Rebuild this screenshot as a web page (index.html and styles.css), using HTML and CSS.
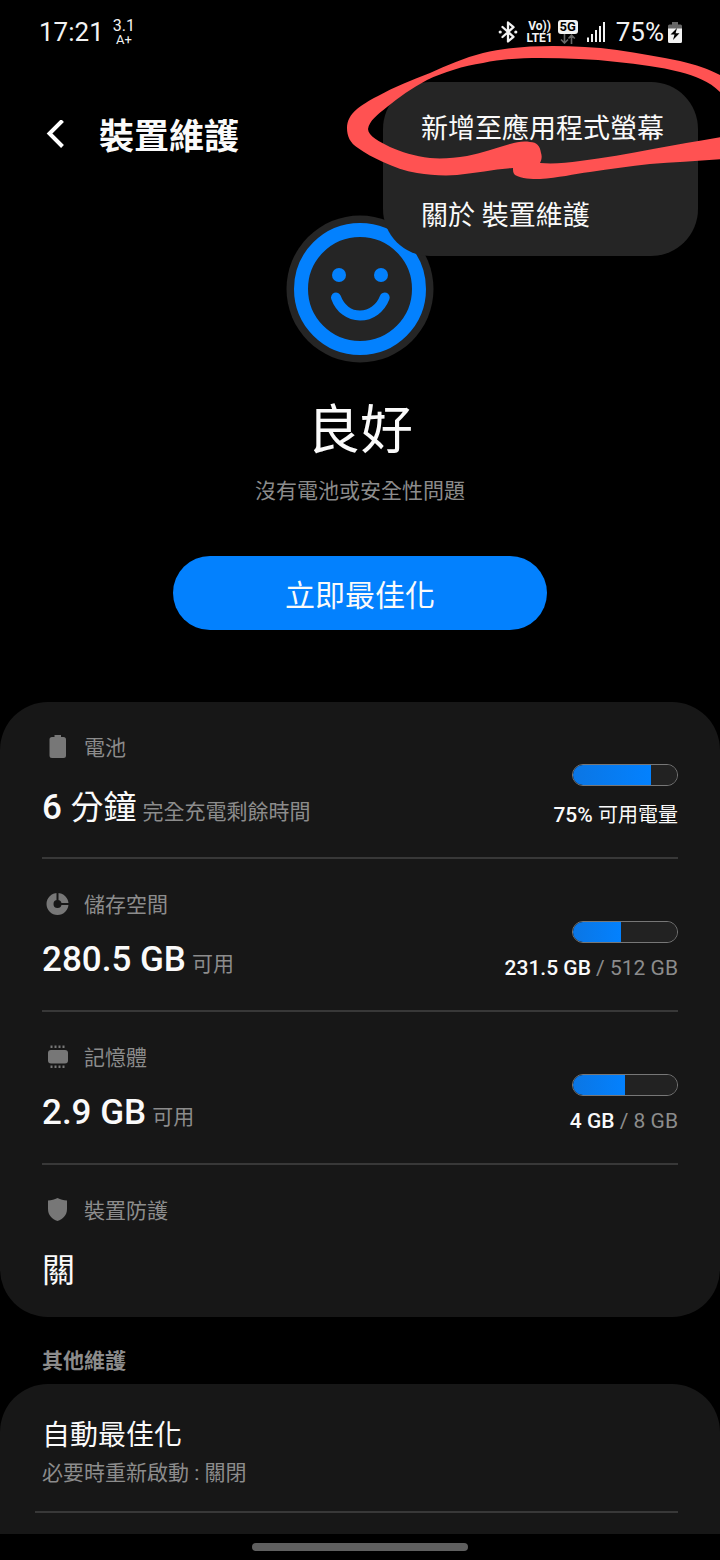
FILE: index.html
```
<!DOCTYPE html>
<html lang="zh-Hant">
<head>
<meta charset="utf-8">
<meta name="viewport" content="width=device-width, initial-scale=1">
<title>裝置維護</title>
<link rel="stylesheet" href="styles.css">
</head>
<body>
<div class="screen">
  <header class="status-bar">
    <span class="clock">17:21</span>
    <span class="widget"><span class="widget-top">3.1</span><span class="widget-bottom">A+</span></span>
    <div class="status-icons">
      <svg class="bluetooth" viewBox="0 0 20 24" aria-label="藍牙">
        <path d="M4.500 7L15.500 16.800L10 21.500V2.500L15.500 7.200L4.500 17" fill="none" stroke="#f2f2f2" stroke-width="2.300" stroke-linejoin="round" stroke-linecap="round"/>
        <circle cx="2.200" cy="12" r="1.600" fill="#f2f2f2"/><circle cx="17.800" cy="12" r="1.600" fill="#f2f2f2"/>
      </svg>
      <span class="volte"><span>Vo))</span><span>LTE1</span></span>
      <span class="network">
        <span class="network-badge">5G</span>
        <svg class="traffic" viewBox="0 0 16 10"><path d="M4.500 0V8.500M1 5.500L4.500 9L8 5.500M11.500 10V1.500M8.500 4.500L11.500 1.200L14.800 4.500" fill="none" stroke="#666" stroke-width="1.600"/></svg>
      </span>
      <svg class="signal" viewBox="0 0 18 20" fill="#f2f2f2"><path d="M0 15.500h2v4.500h-2zM4 12h2v8h-2zM8 8h2v12h-2zM12 4h2v16h-2zM16 0h2v20h-2z"/></svg>
      <span class="percent">75%</span>
      <svg class="battery" viewBox="0 0 14 21">
        <path d="M4 0h6v2.500h2.500a1.500 1.500 0 0 1 1.500 1.500v3H0V4a1.500 1.500 0 0 1 1.500-1.500H4z" fill="#666"/>
        <path d="M0 6.500h14V19.500a1.500 1.500 0 0 1-1.500 1.500h-11a1.500 1.500 0 0 1-1.500-1.500z" fill="#f2f2f2"/>
        <path d="M9 6L2.500 12.500H6.500L5 18L11.500 11.300H7.600z" fill="#000"/>
      </svg>
    </div>
  </header>

  <div class="app-bar">
    <button class="back" type="button" aria-label="返回">
      <svg viewBox="0 0 20 30"><path d="M17.500 .5L4.500 13.500L17.500 26.500" fill="none" stroke="#fff" stroke-width="4"/></svg>
    </button>
    <h1 class="title">裝置維護</h1>
  </div>

  <main>
    <section class="hero">
      <svg class="face" viewBox="0 0 148 148" aria-hidden="true">
        <circle cx="74" cy="74" r="73.500" fill="#252525"/>
        <circle cx="74" cy="74" r="59" fill="none" stroke="#0381fe" stroke-width="14"/>
        <circle cx="53" cy="60" r="7" fill="#0381fe"/>
        <circle cx="95" cy="60" r="7" fill="#0381fe"/>
        <path d="M50 82.500C54 93.500 63 100.500 74 100.500S94.500 93.500 98.700 82.500" fill="none" stroke="#0381fe" stroke-width="10" stroke-linecap="round"/>
      </svg>
      <h2 class="rating">良好</h2>
      <p class="summary">沒有電池或安全性問題</p>
      <button class="optimize" type="button">立即最佳化</button>
    </section>

    <section class="card">
      <div class="row">
        <div class="info">
          <h3 class="label"><svg class="icon" viewBox="0 0 32 26" fill="#777"><path d="M12.500 0h6.500v2h2.500a2.500 2.500 0 0 1 2.500 2.500v16a2.500 2.500 0 0 1-2.500 2.500h-11.500a2.500 2.500 0 0 1-2.500-2.500v-16a2.500 2.500 0 0 1 2.500-2.500h2.500z"/></svg>電池</h3>
          <p class="value">6 <span class="han">分鐘</span><span class="note">完全充電剩餘時間</span></p>
        </div>
        <div class="usage">
          <progress max="100" value="75" aria-label="電池"></progress>
          <p class="amount"><strong>75% <span class="amount-han">可用電量</span></strong></p>
        </div>
      </div>
      <div class="row">
        <div class="info">
          <h3 class="label"><svg class="icon" viewBox="0 0 32 26"><circle cx="15.500" cy="12" r="7.500" fill="none" stroke="#777" stroke-width="7"/><path d="M15.500 0V12H28" fill="none" stroke="#171717" stroke-width="2"/></svg>儲存空間</h3>
          <p class="value">280.5 GB<span class="note">可用</span></p>
        </div>
        <div class="usage">
          <progress max="100" value="46" aria-label="儲存空間"></progress>
          <p class="amount"><strong>231.5 GB</strong> / 512 GB</p>
        </div>
      </div>
      <div class="row">
        <div class="info">
          <h3 class="label"><svg class="icon" viewBox="0 0 32 26"><rect x="6" y="5" width="20" height="13.500" rx="3" fill="#777"/><path d="M9.500 .5v2.500M13.500 .5v2.500M17.500 .5v2.500M21.500 .5v2.500M9.500 20.500v2.500M13.500 20.500v2.500M17.500 20.500v2.500M21.500 20.500v2.500" stroke="#777" stroke-width="2"/></svg>記憶體</h3>
          <p class="value">2.9 GB<span class="note">可用</span></p>
        </div>
        <div class="usage">
          <progress max="100" value="50" aria-label="記憶體"></progress>
          <p class="amount"><strong>4 GB</strong> / 8 GB</p>
        </div>
      </div>
      <div class="row">
        <div class="info">
          <h3 class="label"><svg class="icon" viewBox="0 0 32 26" fill="#777"><path d="M15.500 0C18.500 1.600 21.500 2.400 25 2.600V11C25 17 21 21 15.500 23C10 21 6 17 6 11V2.600C9.500 2.400 12.500 1.600 15.500 0z"/></svg>裝置防護</h3>
          <p class="value"><span class="han">關</span></p>
        </div>
      </div>
    </section>

    <h2 class="section-title">其他維護</h2>
    <section class="card card-open">
      <div class="setting">
        <h3 class="setting-name">自動最佳化</h3>
        <p class="setting-state">必要時重新啟動 : 關閉</p>
      </div>
    </section>
  </main>

  <footer class="nav-bar"><span class="nav-handle"></span></footer>

  <div class="menu" role="menu">
    <button type="button" role="menuitem">新增至應用程式螢幕</button>
    <button type="button" role="menuitem">關於 裝置維護</button>
  </div>

  <svg class="scribble" viewBox="340 40 380 150" aria-hidden="true">
    <path fill="#ff5252" d="M722 76C711 70 697 65 680 61C660 57 639 53 617 50C595 47 574 46 553 46C528 46 505 48 483 53C464 58 447 65 430 73C412 80 394 87 378 96C368 101 362 105 357 109C350 115 347 121 347 128C347 136 350 143 358 148C365 153 374 158 383 162C394 167 405 171 417 173C430 175 443 176 457 175C477 173 495 169 513 168C513 171 513 173 515 175C522 179 531 179 540 179C558 178 574 174 590 172C610 169 630 166 650 164C673 162 697 161 722 159V137C698 141 676 145 653 149C628 154 604 158 580 161C566 163 553 164 540 163C542 159 542 156 541 153C540 146 537 142 530 142C523 141 517 142 510 144C495 148 482 153 467 156C454 158 442 159 430 158C415 156 401 152 390 147C380 142 368 136 368 129C369 121 378 114 387 107C399 97 412 88 427 80C444 72 463 66 483 63C502 59 520 58 540 58C566 58 592 59 617 62C639 64 660 67 680 72C696 76 711 82 722 94Z"/>
  </svg>
</div>
</body>
</html>
```

FILE: styles.css
```
* {
  box-sizing: border-box;
}

body {
  margin: 0;
  background: #000;
  color: #fafafa;
  font-family: Roboto, "Noto Sans CJK TC", sans-serif;
}

h1, h2, h3, p {
  margin: 0;
  font-weight: 400;
}

button {
  padding: 0;
  border: 0;
  background: none;
  color: inherit;
  font: inherit;
}

svg {
  display: block;
  flex: none;
}

.screen {
  position: relative;
  overflow: hidden;
}

/* Status bar */
.status-bar {
  display: flex;
  align-items: center;
  height: 64px;
  padding: 0 38px 0 39px;
  color: #f2f2f2;
}

.clock,
.percent {
  font-size: 26px;
  line-height: 32px;
}

.widget {
  display: flex;
  flex-direction: column;
  align-items: center;
  margin-left: 9px;
}

.widget-top {
  font-size: 16px;
  line-height: 14px;
}

.widget-bottom {
  font-size: 13px;
  line-height: 13px;
}

.status-icons {
  display: flex;
  align-items: center;
  margin-left: auto;
}

.bluetooth {
  width: 20px;
  height: 24px;
}

.volte {
  display: flex;
  flex-direction: column;
  align-items: center;
  margin-left: 8px;
  font-size: 12px;
  font-weight: 700;
  line-height: 12px;
}

.network {
  display: flex;
  flex-direction: column;
  align-items: center;
  margin-left: 5px;
}

.network-badge {
  width: 20px;
  border-radius: 3px;
  background: #f2f2f2;
  color: #000;
  font-size: 13px;
  font-weight: 700;
  line-height: 14px;
  text-align: center;
}

.traffic {
  width: 16px;
  height: 10px;
}

.signal {
  width: 18px;
  height: 20px;
  margin: 0 11px 0 9px;
}

.battery {
  width: 14px;
  height: 21px;
  margin-left: 4px;
}

/* App bar */
.app-bar {
  display: flex;
  align-items: center;
  gap: 32px;
  height: 142px;
  padding-left: 45px;
}

.back {
  width: 22px;
  height: 30px;
}

.back svg {
  width: 20px;
  height: 30px;
}

.title {
  padding-top: 6px;
  font-size: 35px;
  font-weight: 700;
  line-height: 48px;
}

/* Overall rating */
.hero {
  display: flex;
  flex-direction: column;
  align-items: center;
  padding: 9px 24px 72px;
}

.face {
  width: 148px;
  height: 148px;
}

.rating {
  margin-top: 32px;
  font-size: 53px;
  line-height: 72px;
}

.summary {
  margin-top: 8px;
  color: #8c8c8c;
  font-size: 21px;
  line-height: 32px;
}

.optimize {
  width: 374px;
  max-width: 100%;
  margin-top: 49px;
  padding: 18px 24px 12px;
  border-radius: 37px;
  background: #0381fe;
  font-size: 30px;
  line-height: 44px;
}

/* Cards */
.card {
  padding: 0 42px;
  border-radius: 48px;
  background: #171717;
}

.row {
  display: flex;
  justify-content: space-between;
  padding: 30px 0 28px;
}

.row:first-child,
.row:last-child {
  padding-bottom: 24px;
}

.row + .row {
  border-top: 2px solid #383838;
}

.label {
  display: flex;
  align-items: center;
  gap: 10px;
  color: #8c8c8c;
  font-size: 21px;
  line-height: 32px;
}

.icon {
  width: 32px;
  height: 26px;
}

.value {
  margin-top: 17px;
  font-size: 35px;
  font-weight: 500;
  line-height: 44px;
}

.han {
  font-size: 33px;
  font-weight: 400;
  line-height: normal;
}

.note {
  margin-left: 6px;
  color: #8c8c8c;
  font-size: 21px;
  font-weight: 400;
  line-height: 1;
}

.usage {
  display: flex;
  flex-direction: column;
  align-items: flex-end;
  gap: 11px;
  padding-top: 32px;
}

progress {
  appearance: none;
  display: block;
  width: 106px;
  height: 22px;
  overflow: hidden;
  border: 1px solid #777;
  border-radius: 11px;
  background: #222;
}

progress::-webkit-progress-bar {
  background: #222;
}

progress::-webkit-progress-value {
  background: linear-gradient(90deg, #0b76e4, #0381fe);
}

.amount {
  color: #8c8c8c;
  font-size: 21px;
  line-height: 28px;
}

.amount strong {
  color: #fafafa;
  font-weight: 500;
}

.amount .amount-han {
  font-size: 20px;
  font-weight: 400;
  line-height: 36px;
}

.section-title {
  padding: 28px 42px 7px;
  color: #8c8c8c;
  font-size: 21px;
  font-weight: 700;
  line-height: 32px;
}

.card-open {
  padding: 0 42px 21px 35px;
  border-radius: 48px 48px 0 0;
}

.setting {
  padding: 31px 0 22px 7px;
  border-bottom: 2px solid #383838;
}

.setting-name {
  font-size: 28px;
  line-height: 42px;
}

.setting-state {
  color: #8c8c8c;
  font-size: 21px;
  line-height: 32px;
}

/* Gesture bar */
.nav-bar {
  display: flex;
  justify-content: center;
  padding: 9px 0;
}

.nav-handle {
  width: 30%;
  height: 8px;
  border-radius: 4px;
  background: #5f5f5f;
}

/* Overflow menu */
.menu {
  position: absolute;
  top: 82px;
  right: 22px;
  display: flex;
  flex-direction: column;
  border-radius: 47px;
  background: #252525;
}

.menu button {
  padding: 27px 34px 19px 38px;
  font-size: 27px;
  line-height: 41px;
  text-align: left;
}

/* Hand-drawn ring around the first menu entry */
.scribble {
  position: absolute;
  top: 40px;
  right: 0;
  width: 380px;
  height: 150px;
  pointer-events: none;
}
```
